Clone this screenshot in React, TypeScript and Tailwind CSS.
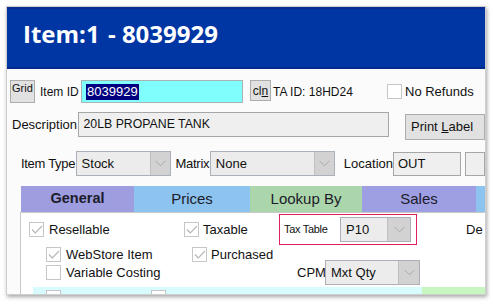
import React from "react";

const Check = ({ checked }: { checked?: boolean }) => (
  <div className="w-[15px] h-[15px] border border-[#c6c6c6] bg-white flex items-center justify-center shrink-0">
    {checked && (
      <svg width="12" height="10" viewBox="0 0 12 10">
        <path d="M1 4.5 L4.3 8 L11 1" stroke="#b4b4b4" strokeWidth="1.1" fill="none" />
      </svg>
    )}
  </div>
);

const Chevron = () => (
  <svg width="11" height="7" viewBox="0 0 11 7">
    <path d="M0.5 0.8 L5.5 5.8 L10.5 0.8" stroke="#a9a9a9" strokeWidth="1" fill="none" />
  </svg>
);

const Select = ({ value, className, arrowW }: { value: string; className: string; arrowW: string }) => (
  <div className={`flex border border-[#aab0b8] bg-[#ececec] shrink-0 ${className}`}>
    <div className="flex-1 flex items-center pl-[5px] text-[13px] text-[#111]">{value}</div>
    <div className={`${arrowW} h-full bg-[#d2d2d2] border-l border-[#c0c0c0] flex items-center justify-center`}>
      <Chevron />
    </div>
  </div>
);

export default function App() {
  return (
    <div
      className="w-[493px] h-[304px] bg-white overflow-hidden pt-[6px] pl-[6px]"
      style={{ fontFamily: '"Liberation Sans", Arial, sans-serif' }}
    >
      <div className="w-[480px] h-[289px] border border-[#cfcfcf] bg-white overflow-hidden shadow-[1px_2px_4px_rgba(0,0,0,0.35)] flex flex-col">
        {/* Header */}
        <div className="h-[62px] shrink-0 bg-[#0035a4] border-t-2 border-b-2 border-t-[#0a2c90] border-b-[#002a8c] flex items-start pl-[16px] pt-[10px]">
          <span
            className="text-white font-bold text-[24px] whitespace-pre leading-[30px]"
            style={{ fontFamily: '"Open Sans", "Noto Sans", sans-serif' }}
          >
            Item:1 <span className="ml-[2px]">- 8039929</span>
          </span>
        </div>

        {/* Body */}
        <div className="flex-1 bg-[#fbfbfb] flex flex-col text-[#111]">
          {/* Row 1 */}
          <div className="mt-[11px] h-[23px] flex items-center">
            <div className="ml-[3px] w-[25px] h-[23px] bg-[#e1e1e1] border border-[#adadad] text-[11px] leading-none pl-[1px] pt-[2px]">
              Grid
            </div>
            <div className="ml-[5px] w-[41px] text-[12px]">Item ID</div>
            <div className="w-[162px] h-[23px] bg-[#80fefe] border border-[#a8b4b4] flex items-center pl-[4px]">
              <span className="bg-[#000080] text-white text-[13px] leading-[16px] px-[1px]">8039929</span>
            </div>
            <div className="ml-[7px] w-[21px] h-[21px] self-start bg-[#e1e1e1] border border-[#adadad] text-[12px] flex items-center justify-center">
              <span>
                cl<span className="underline">n</span>
              </span>
            </div>
            <div className="ml-[2px] w-[114px] text-[12px]">TA ID: 18HD24</div>
            <Check />
            <div className="ml-[3px] text-[13px]">No Refunds</div>
          </div>

          {/* Row 2 */}
          <div className="mt-[9px] h-[28px] flex items-start">
            <div className="ml-[5px] w-[68px] h-[25px] flex items-center text-[13px]">Description</div>
            <div className="w-[323px] h-[25px] bg-[#efefef] border border-[#a6a6a6] flex items-center pl-[5px] text-[12.3px]">
              20LB PROPANE TANK
            </div>
            <div className="ml-[16px] mt-[2px] w-[80px] h-[26px] shrink-0 bg-[#e1e1e1] border border-[#adadad] flex items-center pl-[5px] text-[13px] whitespace-nowrap">
              Print&nbsp;<span className="underline">L</span>abel
            </div>
          </div>

          {/* Row 3 */}
          <div className="mt-[11px] h-[25px] flex items-center">
            <div className="ml-[14px] w-[59px] text-[13px] tracking-[-0.3px]">Item Type</div>
            <Select value="Stock" className="w-[95px] h-[25px]" arrowW="w-[20px]" />
            <div className="ml-[5px] w-[37px] text-[13px] tracking-[-0.3px]">Matrix</div>
            <Select value="None" className="w-[125px] h-[25px]" arrowW="w-[20px]" />
            <div className="ml-[9px] w-[52px] text-[13px]">Location</div>
            <div className="w-[73px] h-[24px] bg-[#efefef] border border-[#a6a6a6] flex items-center pl-[4px] text-[13px]">
              OUT
            </div>
            <div className="ml-[4px] w-[20px] h-[24px] shrink-0 bg-[#efefef] border border-[#a6a6a6]" />
          </div>

          {/* Tabs */}
          <div className="mt-[10px] h-[26px] flex ml-[14px] text-[15px] text-[#1c1c2a]">
            <div className="w-[113px] shrink-0 bg-[#9d9ddf] flex items-center justify-center font-semibold text-[14.5px]">General</div>
            <div className="w-[116px] shrink-0 bg-[#8dc3ef] flex items-center justify-center">Prices</div>
            <div className="w-[112px] shrink-0 bg-[#abd6ab] flex items-center justify-center">Lookup By</div>
            <div className="w-[114px] shrink-0 bg-[#9e9ee2] flex items-center justify-center">Sales</div>
            <div className="w-[20px] shrink-0 bg-[#8dc3ef]" />
          </div>

          {/* Panel */}
          <div className="ml-[13px] flex-1 bg-white border-l border-t border-[#c8c8c8] flex flex-col text-[13px] overflow-hidden">
            {/* Row A */}
            <div className="mt-[1px] h-[31px] flex items-center">
              <div className="ml-[8px] w-[155px] flex items-center gap-[5px]">
                <Check checked />
                <span>Resellable</span>
              </div>
              <div className="w-[95px] flex items-center gap-[4px]">
                <Check checked />
                <span>Taxable</span>
              </div>
              <div className="w-[138px] h-[31px] border border-[#e0205a] flex items-center">
                <div className="ml-[4px] w-[56px] text-[11px] tracking-[-0.3px]">Tax Table</div>
                <Select value="P10" className="w-[71px] h-[25px]" arrowW="w-[23px]" />
              </div>
              <div className="ml-[49px]">De</div>
            </div>
            {/* Row B */}
            <div className="mt-[2px] h-[15px] flex items-center">
              <div className="ml-[25px] w-[146px] flex items-center gap-[5px]">
                <Check checked />
                <span>WebStore Item</span>
              </div>
              <div className="flex items-center gap-[4px]">
                <Check checked />
                <span>Purchased</span>
              </div>
            </div>
            {/* Row C */}
            <div className="mt-[-2px] h-[25px] flex items-center">
              <div className="ml-[25px] w-[251px] flex items-center gap-[5px]">
                <Check />
                <span>Variable Costing</span>
              </div>
              <div className="w-[28px]">CPM</div>
              <Select value="Mxt Qty" className="w-[95px] h-[25px]" arrowW="w-[21px]" />
            </div>
            {/* Strip */}
            <div className="mt-[2px] h-[12px] flex shrink-0">
              <div className="ml-[12px] w-[389px] bg-[#d8fbfd] flex items-start pt-[3px]">
                <div className="ml-[13px] w-[15px] h-[15px] border border-[#c6c6c6] bg-white" />
                <div className="ml-[90px] w-[15px] h-[15px] border border-[#c6c6c6] bg-white" />
              </div>
              <div className="flex-1 bg-[#c7f6c0]" />
            </div>
          </div>
        </div>
      </div>
    </div>
  );
}
